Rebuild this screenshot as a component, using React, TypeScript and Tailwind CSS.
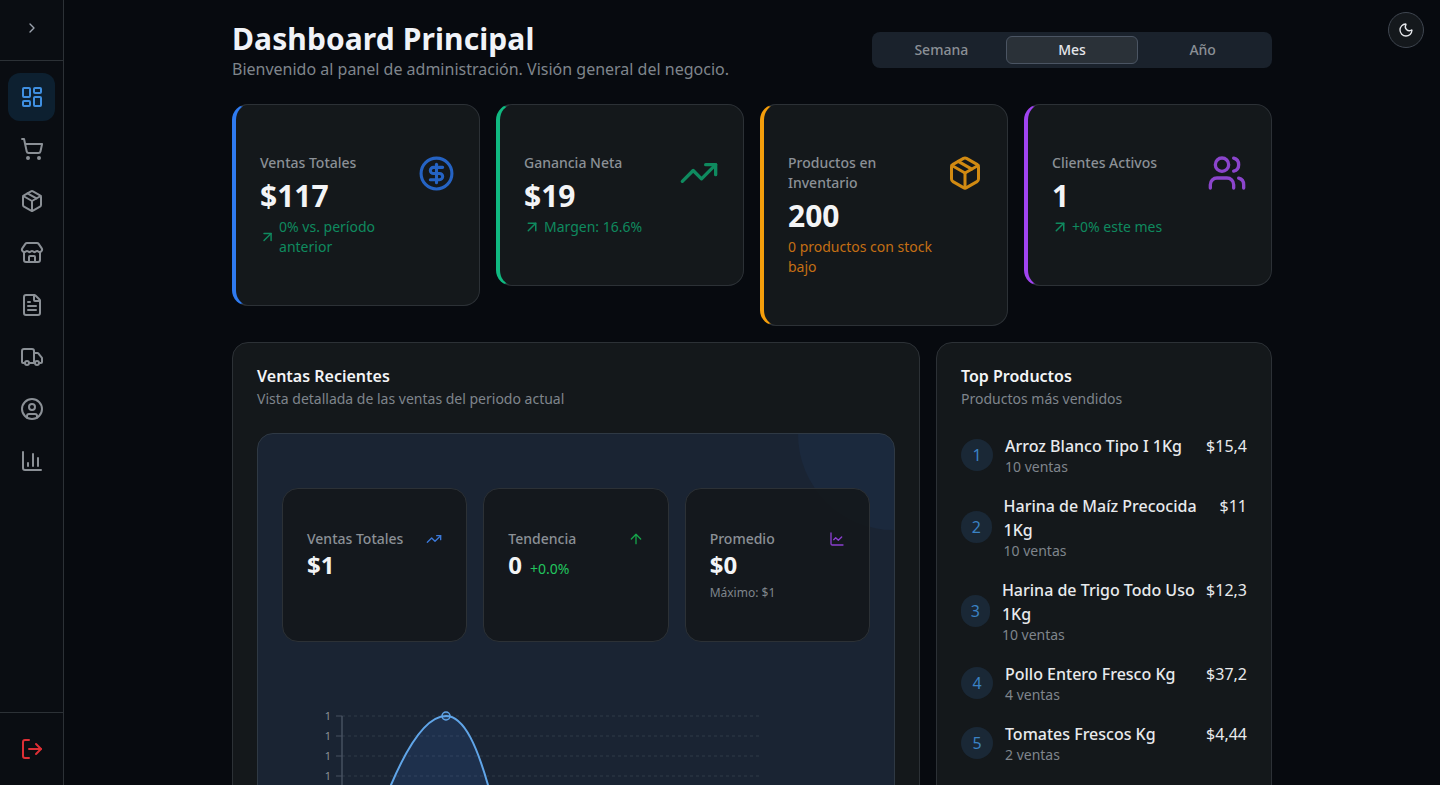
import {
  ArrowUp,
  ArrowUpRight,
  ChartColumn,
  ChartLine,
  ChevronRight,
  CircleDollarSign,
  CircleUser,
  FileText,
  LayoutDashboard,
  LogOut,
  Moon,
  Package,
  ShoppingCart,
  Store,
  TrendingUp,
  Truck,
  Users,
} from 'lucide-react';

const navItems = [LayoutDashboard, ShoppingCart, Package, Store, FileText, Truck, CircleUser, ChartColumn];

const products = [
  { name: 'Arroz Blanco Tipo I 1Kg', sales: '10 ventas', price: '$15,4' },
  { name: 'Harina de Maíz Precocida 1Kg', sales: '10 ventas', price: '$11' },
  { name: 'Harina de Trigo Todo Uso 1Kg', sales: '10 ventas', price: '$12,3' },
  { name: 'Pollo Entero Fresco Kg', sales: '4 ventas', price: '$37,2' },
  { name: 'Tomates Frescos Kg', sales: '2 ventas', price: '$4,44' },
];

function Trend({ text }: { text: string }) {
  return (
    <div className="mt-[3px] flex items-center text-sm text-[#0f8a5f]">
      <ArrowUpRight className="-ml-px mr-[3px] h-[18px] w-[18px] shrink-[0.4]" />
      <span>{text}</span>
    </div>
  );
}

function StatCard({
  label,
  value,
  accent,
  icon,
  children,
}: {
  label: string;
  value: string;
  accent: string;
  icon: React.ReactNode;
  children: React.ReactNode;
}) {
  return (
    <div className={`rounded-2xl border border-l-4 border-[#2c3136] bg-[#14181b] py-12 pl-6 pr-6 ${accent}`}>
      <div className="flex items-start justify-between">
        <div className="w-[152px]">
          <p className="text-sm font-medium text-[#8b9096]">{label}</p>
          <p className="mt-[5px] text-3xl font-bold text-[#f3f4f6]">{value}</p>
          {children}
        </div>
        <div className="flex h-10 items-center">{icon}</div>
      </div>
    </div>
  );
}

function MiniCard({
  label,
  icon,
  children,
}: {
  label: string;
  icon: React.ReactNode;
  children: React.ReactNode;
}) {
  return (
    <div className="h-[154px] rounded-2xl border border-[#2c3136] bg-[#14181c]/95 px-6 pt-10">
      <div className="flex items-center justify-between">
        <p className="text-sm font-medium text-[#8b9096]">{label}</p>
        {icon}
      </div>
      {children}
    </div>
  );
}

function SalesChart() {
  const ticks = [26, 46, 66, 86];
  return (
    <svg className="mt-12 block" width="588" height="140" viewBox="0 0 588 140" fill="none">
      {ticks.map((y) => (
        <g key={y}>
          <line x1="60" x2="478" y1={y} y2={y} stroke="#2e3a49" strokeDasharray="3 3" />
          <line x1="54" x2="60" y1={y} y2={y} stroke="#465160" />
          <text x="49" y={y + 4} textAnchor="end" fontSize="11" fill="#8b9096">
            1
          </text>
        </g>
      ))}
      <line x1="60" x2="60" y1="26" y2="140" stroke="#465160" strokeWidth="1.5" />
      <path d="M109 95C123 62 143 26 164 26C183 26 196 60 206 95L218 140H96Z" fill="#3b82f6" fillOpacity="0.13" />
      <path d="M96 125L109 95C123 62 143 26 164 26C183 26 196 60 206 95L218 140" stroke="#60a5e8" strokeWidth="2" />
      <circle cx="164" cy="26" r="4" stroke="#60a5e8" strokeWidth="1.5" fill="#60a5e8" fillOpacity="0.15" />
    </svg>
  );
}

export default function App() {
  return (
    <div className="flex h-screen overflow-hidden bg-[#070a0f] font-['Noto_Sans',sans-serif] text-[#f3f4f6]">
      {/* Sidebar */}
      <aside className="flex w-16 shrink-0 flex-col border-r border-[#2c3136] bg-[#0a0d12]">
        <div className="flex h-[61px] items-center justify-center border-b border-[#2c3136] pb-1">
          <ChevronRight className="h-4 w-4 text-[#9ca3af]" />
        </div>
        <nav className="flex flex-1 flex-col items-center gap-1 pt-3">
          {navItems.map((Icon, index) => (
            <div
              key={index}
              className={
                index === 0
                  ? 'flex h-12 w-[47px] items-center justify-center rounded-xl bg-[#0d2030] text-[#3f8fe0]'
                  : 'flex h-12 w-[47px] items-center justify-center rounded-xl text-[#8b9096]'
              }
            >
              <Icon className="h-6 w-6" />
            </div>
          ))}
        </nav>
        <div className="flex h-[73px] items-center justify-center border-t border-[#2c3136]">
          <LogOut className="h-6 w-6 text-[#dc2f35]" />
        </div>
      </aside>

      {/* Main */}
      <main className="relative flex-1 overflow-hidden">
        <button className="absolute right-4 top-3 flex h-9 w-9 items-center justify-center rounded-full border border-[#3f4650] bg-[#14181c]">
          <Moon className="h-4 w-4 text-[#e5e7eb]" />
        </button>

        <div className="mx-auto w-[1040px] pt-[21px]">
          <div className="mb-[23px] flex items-center justify-between">
            <div>
              <h1 className="text-3xl font-bold tracking-[0.1px] text-[#f0f3f8]">Dashboard Principal</h1>
              <p className="text-base text-[#7f858c]">Bienvenido al panel de administración. Visión general del negocio.</p>
            </div>
            <div className="-mt-0.5 grid h-9 w-[400px] grid-cols-3 rounded-lg bg-[#1a222c] p-1 text-sm font-medium">
              <div className="flex items-center justify-center text-[#8b9096]">Semana</div>
              <div className="-mx-px flex items-center justify-center rounded-md border border-[#4b5563] bg-[#2a3138] text-[#e5e7eb]">Mes</div>
              <div className="flex items-center justify-center text-[#8b9096]">Año</div>
            </div>
          </div>

          <div className="grid grid-cols-4 items-start gap-4">
            <StatCard label="Ventas Totales" value="$117" accent="border-l-[#2f7bf0]" icon={<CircleDollarSign className="h-[37px] w-[37px] text-[#2563c4]" />}>
              <Trend text="0% vs. período anterior" />
            </StatCard>
            <StatCard label="Ganancia Neta" value="$19" accent="border-l-[#10b981]" icon={<TrendingUp className="h-10 w-10 text-[#0f8a5f]" />}>
              <Trend text="Margen: 16.6%" />
            </StatCard>
            <StatCard label="Productos en Inventario" value="200" accent="border-l-[#f59e0b]" icon={<Package className="h-9 w-9 text-[#d18a12]" />}>
              <p className="mt-[3px] text-sm text-[#c46f14]">0 productos con stock bajo</p>
            </StatCard>
            <StatCard label="Clientes Activos" value="1" accent="border-l-[#a044f0]" icon={<Users className="h-10 w-10 text-[#8b45cc]" />}>
              <Trend text="+0% este mes" />
            </StatCard>
          </div>

          <div className="mt-4 grid grid-cols-3 gap-4">
            <section className="col-span-2 rounded-2xl border border-[#2c3136] bg-[#14181b] p-6">
              <h2 className="text-base font-semibold leading-[18px]">Ventas Recientes</h2>
              <p className="mt-1 text-sm text-[#7f858c]">Vista detallada de las ventas del periodo actual</p>

              <div className="relative mt-6 overflow-hidden rounded-2xl border border-[#2f3944] bg-[#1a2433] px-6 pb-6 pt-[54px]">
                <div className="absolute -right-24 -top-24 h-48 w-48 rounded-full bg-[#3b82f6]/5" />
                <div className="relative grid grid-cols-3 gap-4">
                  <MiniCard label="Ventas Totales" icon={<TrendingUp className="h-4 w-4 text-[#3b78d8]" />}>
                    <p className="text-2xl font-bold">$1</p>
                  </MiniCard>
                  <MiniCard label="Tendencia" icon={<ArrowUp className="h-4 w-4 text-[#16a34a]" />}>
                    <p className="text-2xl font-bold">
                      0<span className="ml-2 text-sm font-normal text-[#22c55e]">+0.0%</span>
                    </p>
                  </MiniCard>
                  <MiniCard label="Promedio" icon={<ChartLine className="h-4 w-4 text-[#8b3fd0]" />}>
                    <p className="text-2xl font-bold">$0</p>
                    <p className="mt-1 text-xs text-[#7f858c]">Máximo: $1</p>
                  </MiniCard>
                </div>
                <div className="relative">
                  <SalesChart />
                </div>
              </div>
            </section>

            <section className="rounded-2xl border border-[#2c3136] bg-[#14181b] p-6">
              <h2 className="text-base font-semibold leading-[18px]">Top Productos</h2>
              <p className="mt-1 text-sm text-[#7f858c]">Productos más vendidos</p>

              <div className="mt-6 flex flex-col gap-4">
                {products.map((product, index) => (
                  <div key={product.name} className="flex items-start justify-between">
                    <div className="flex items-center gap-3">
                      <div className="flex h-8 w-8 items-center justify-center rounded-full bg-[#1a2836] text-[#3b82c4]">
                        {index + 1}
                      </div>
                      <div className="pt-px">
                        <p className="text-base font-medium text-[#e8eaed]">{product.name}</p>
                        <p className="-mt-px text-sm text-[#7f858c]">{product.sales}</p>
                      </div>
                    </div>
                    <p className="pt-px text-base text-[#e8eaed]">{product.price}</p>
                  </div>
                ))}
              </div>
            </section>
          </div>
        </div>
      </main>
    </div>
  );
}
